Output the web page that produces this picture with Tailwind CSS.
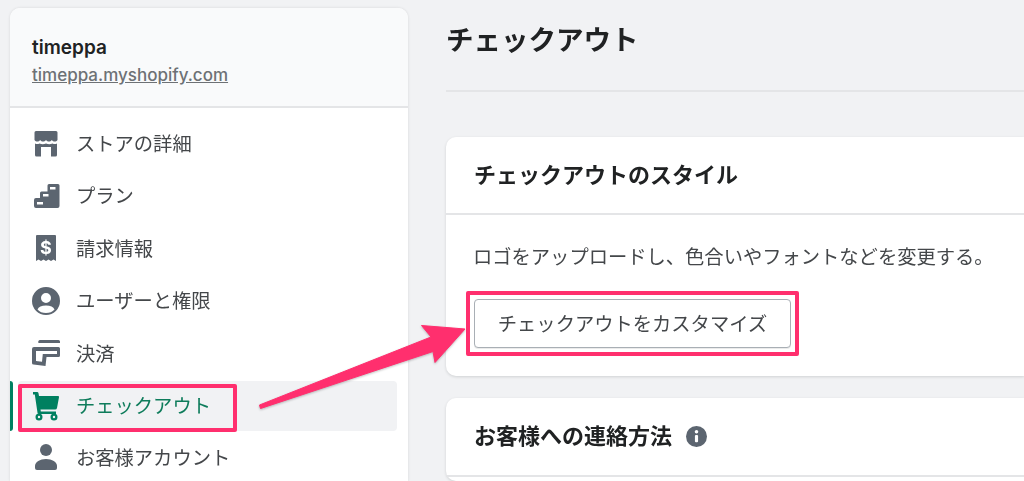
<!DOCTYPE html>
<html lang="ja">
<head>
  <meta charset="UTF-8">
  <title>チェックアウト</title>
  <script src="https://cdn.jsdelivr.net/npm/@tailwindcss/browser@4"></script>
</head>
<body class="relative h-[481px] overflow-hidden bg-[#f1f2f4] text-[#202223] font-['Inter','Noto_Sans_CJK_JP',sans-serif]">

  <div class="flex items-start h-[481px] pl-[10px] pt-[8px] overflow-hidden blur-[0.3px]">

    <!-- Sidebar -->
    <aside class="w-[398px] h-[473px] shrink-0 bg-white rounded-t-[10px] shadow-[0_0_3px_rgba(23,24,24,0.12)] overflow-hidden">
      <div class="h-[100px] px-[22px] pt-[28px] bg-[#f9fafb] border-b-2 border-[#e4e5e7]">
        <p class="text-[19px] leading-[24px] font-semibold">timeppa</p>
        <a class="block mt-[3px] text-[17px] leading-[24px] font-medium text-[#6d7175] underline">timeppa.myshopify.com</a>
      </div>

      <nav class="pt-[9px] text-[19.300px] text-[#44474a]">
        <a class="flex items-center h-[52.500px] pl-[21px] gap-[15px]">
          <svg class="w-[30px] h-[30px]" viewBox="0 0 30 30" fill="#5c6570"><path d="M5 3h20a1.500 1.500 0 0 1 1.500 1.500v7.500c-1.500 2-4 2-5.700 0-1.500 2-4.100 2-5.800 0-1.700 2-4.300 2-5.800 0-1.700 2-4.200 2-5.700 0V4.500A1.500 1.500 0 0 1 5 3z"/><path d="M4 15.500c1.500.7 3 .7 4.500 0 2 1 4.400 1 6.500 0 2.100 1 4.500 1 6.500 0 1.500.7 3 .7 4.500 0V27a1.500 1.500 0 0 1-1.500 1.500H20V19h-10v9.500H5.500A1.500 1.500 0 0 1 4 27z"/></svg>
          <span class="mt-[2px]">ストアの詳細</span>
        </a>
        <a class="flex items-center h-[52.500px] pl-[21px] gap-[15px]">
          <svg class="w-[30px] h-[30px]" viewBox="0 0 30 30" fill="#5c6570"><path fill-rule="evenodd" d="M18 3h9a1.500 1.500 0 0 1 1.500 1.500V25a2 2 0 0 1-2 2H5a2 2 0 0 1-2-2v-6a2 2 0 0 1 2-2h4v-5a1.500 1.500 0 0 1 1.500-1.500h6V4.500A1.500 1.500 0 0 1 18 3zm1 3v2.500h5.500V6zm-7 7v2.500h5.500V13zM6 21v2.500h6V21z"/></svg>
          <span class="mt-[2px]">プラン</span>
        </a>
        <a class="flex items-center h-[52.500px] pl-[21px] gap-[15px]">
          <svg class="w-[30px] h-[30px]" viewBox="0 0 30 30" fill="#5c6570"><path d="M6 2h18a1 1 0 0 1 1 1v25l-2.500-1.500-2.500 1.500-2.500-1.500-2.500 1.500-2.500-1.500-2.500 1.500-2.500-1.500L5 28V3a1 1 0 0 1 1-1z"/><text x="15" y="20.500" text-anchor="middle" font-size="18" font-weight="700" fill="#fff">$</text></svg>
          <span class="mt-[2px]">請求情報</span>
        </a>
        <a class="flex items-center h-[52.500px] pl-[21px] gap-[15px]">
          <svg class="w-[30px] h-[30px]" viewBox="0 0 30 30" fill="#5c6570"><path fill-rule="evenodd" d="M15 1a14 14 0 1 1 0 28 14 14 0 0 1 0-28zm0 6a5 5 0 1 0 0 10 5 5 0 0 0 0-10zM6.500 23.500c2 2.500 5 3.500 8.500 3.500s6.500-1 8.500-3.500c-1-2.500-4-4-8.500-4s-7.500 1.500-8.500 4z"/></svg>
          <span class="mt-[2px]">ユーザーと権限</span>
        </a>
        <a class="flex items-center h-[52.500px] pl-[21px] gap-[15px]">
          <svg class="w-[30px] h-[30px]" viewBox="0 0 30 30" fill="#5c6570"><path d="M9 2h18.500a1.500 1.500 0 0 1 1.500 1.500V5H7.500A2 2 0 0 1 9 2z"/><path fill-rule="evenodd" d="M3 9h24.500A1.500 1.500 0 0 1 29 10.500V17.500a1.500 1.500 0 0 1-1.500 1.500H15.500L14.500 28 2.500 26.500A1.500 1.500 0 0 1 1 25V11a2 2 0 0 1 2-2zm2 4v10l6 .800.800-7.800H26v-3z"/></svg>
          <span class="mt-[2px]">決済</span>
        </a>
        <a class="relative flex items-center h-[50px] mt-[1px] mb-[1px] ml-[8px] mr-[11px] pl-[13px] gap-[15px] bg-[#f1f2f4] rounded-[4px] text-[#0e7c5b]">
          <span class="absolute -left-[8px] top-0 w-[3px] h-full bg-[#008060] rounded-r-[3px]"></span>
          <svg class="w-[30px] h-[30px]" viewBox="0 0 30 30" fill="#008060"><path d="M2 1h4a1.500 1.500 0 0 1 1.500 1.300L8 5h19a1 1 0 0 1 1 1.200L26 17a2 2 0 0 1-2 1.500H9.500l.3 2H25V23H8a1.500 1.500 0 0 1-1.500-1.300L3.800 3.500H2z"/><path fill-rule="evenodd" d="M8 22.500a3.500 3.500 0 1 1 0 7 3.500 3.500 0 0 1 0-7zm0 2.300a1.200 1.200 0 1 0 0 2.400 1.200 1.200 0 0 0 0-2.400zM23 22.500a3.500 3.500 0 1 1 0 7 3.500 3.500 0 0 1 0-7zm0 2.300a1.200 1.200 0 1 0 0 2.400 1.200 1.200 0 0 0 0-2.400z"/></svg>
          <span class="mt-[2px]">チェックアウト</span>
          <!-- pink annotation -->
          <span class="absolute left-0 top-[3px] w-[219px] h-[48px] border-[4px] border-[#ff2f6e] rounded-[2px]"></span>
        </a>
        <a class="flex items-center h-[52.500px] pl-[21px] gap-[15px]">
          <svg class="w-[30px] h-[30px]" viewBox="0 0 30 30" fill="#5c6570"><circle cx="15" cy="7" r="6"/><path d="M4 23c0-4 5-7 11-7s11 3 11 7v2a2 2 0 0 1-2 2H6a2 2 0 0 1-2-2z"/></svg>
          <span class="mt-[2px]">お客様アカウント</span>
        </a>
      </nav>
    </aside>

    <!-- Main -->
    <main class="flex-1 ml-[38px]">
      <h1 class="h-[84px] pt-[13px] text-[27.500px] leading-[38px] font-bold border-b-2 border-[#e4e5e7]">チェックアウト</h1>

      <section class="mt-[45px] h-[239px] bg-white rounded-l-[10px] shadow-[0_1px_3px_rgba(23,24,24,0.15)]">
        <div class="h-[78px] pl-[28px] flex items-center text-[22px] font-bold border-b-2 border-[#e4e5e7]">チェックアウトのスタイル</div>
        <p class="pl-[27px] pt-[28px] text-[19.300px] leading-[28px] text-[#44474a]">ロゴをアップロードし、色合いやフォントなどを変更する。</p>
        <div class="ml-[20px] mt-[20px] w-[333px] h-[65px] border-[4px] border-[#ff2f6e] rounded-[2px] p-[4px]">
          <button class="w-full h-full pt-[1px] bg-white border border-[#a9afb5] rounded-[4px] shadow-[0_1px_0_rgba(0,0,0,0.08)] text-[19.300px] text-[#44474a]">チェックアウトをカスタマイズ</button>
        </div>
      </section>

      <section class="mt-[22px] h-[83px] bg-white rounded-l-[10px] shadow-[0_1px_3px_rgba(23,24,24,0.15)]">
        <div class="h-[79px] pl-[28px] flex items-center gap-[14px] text-[22px] font-bold border-b-2 border-[#e4e5e7]">
          <span>お客様への連絡方法</span>
          <svg class="w-[21px] h-[21px]" viewBox="0 0 20 20"><circle cx="10" cy="10" r="10" fill="#5c6570"/><rect x="8.500" y="8.500" width="3" height="7" rx="1" fill="#fff"/><circle cx="10" cy="5.500" r="1.700" fill="#fff"/></svg>
        </div>
      </section>
    </main>
  </div>

  <!-- annotation arrow -->
  <svg class="absolute left-0 top-0 pointer-events-none drop-shadow-[0_1px_1px_rgba(0,0,0,0.25)]" width="1024" height="481" viewBox="0 0 1024 481">
    <path fill="#ff2f6e" stroke="#ff2f6e" stroke-width="1" stroke-linejoin="round" d="M259.500 405 L431 337 L421.500 325.500 L465 329 L435 362.500 L433 351.500 L260.500 408.500 Z"/>
  </svg>

</body>
</html>
